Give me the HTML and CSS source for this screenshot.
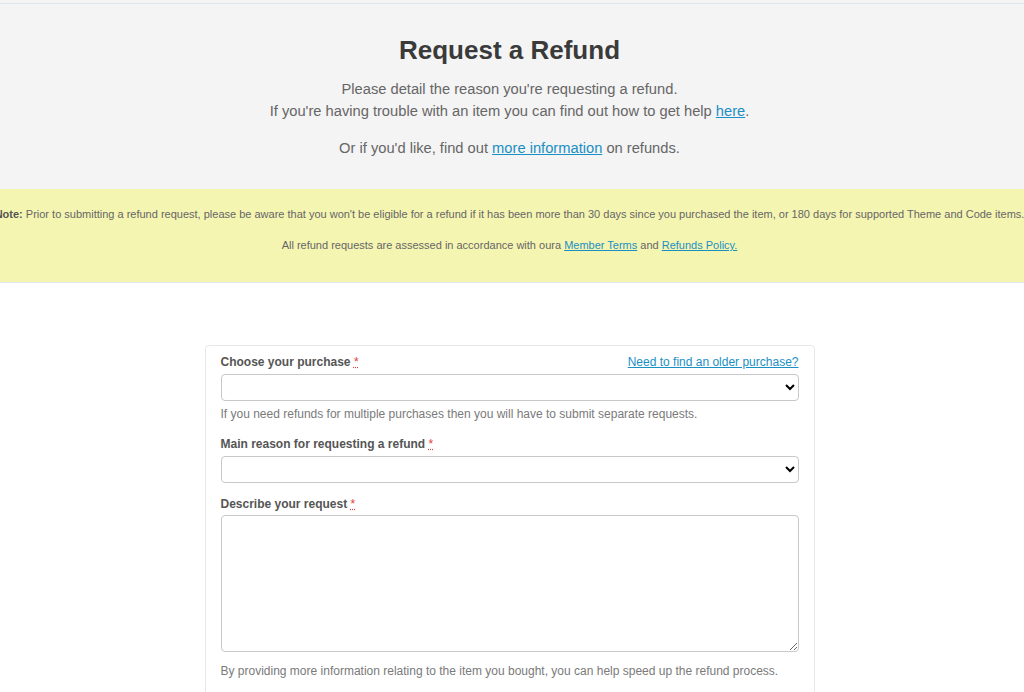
FILE: index.html
```html
<!DOCTYPE html>
<html lang="en">
<head>
  <meta charset="UTF-8">
  <title>Request a Refund</title>
  <link rel="stylesheet" href="styles.css">
</head>
<body>
  <div class="topbar"></div>
  <div class="hero">
    <h1 class="hero-title">Request a Refund</h1>
    <p class="hero-text">Please detail the reason you're requesting a refund.<br>If you're having trouble with an item you can find out how to get help <a href="#">here</a>.</p>
    <p class="hero-text">Or if you'd like, find out <a href="#">more information</a> on refunds.</p>
  </div>
  <div class="notice">
    <p class="notice-line"><span><strong>Note:</strong> Prior to submitting a refund request, please be aware that you won't be eligible for a refund if it has been more than 30 days since you purchased the item, or 180 days for supported Theme and Code items.</span></p>
    <p class="notice-line"><span>All refund requests are assessed in accordance with oura <a href="#">Member Terms</a> and <a href="#">Refunds Policy.</a></span></p>
  </div>
  <div class="main">
    <form class="card">
      <div class="field">
        <div class="label-row">
          <label class="label" for="purchase">Choose your purchase <abbr title="required">*</abbr></label>
          <a class="small-link" href="#">Need to find an older purchase?</a>
        </div>
        <select id="purchase" class="input"></select>
        <p class="hint">If you need refunds for multiple purchases then you will have to submit separate requests.</p>
      </div>
      <div class="field field-reason">
        <div class="label-row">
          <label class="label" for="reason">Main reason for requesting a refund <abbr title="required">*</abbr></label>
        </div>
        <select id="reason" class="input"></select>
      </div>
      <div class="field field-describe">
        <div class="label-row">
          <label class="label" for="describe">Describe your request <abbr title="required">*</abbr></label>
        </div>
        <textarea id="describe" class="input textarea"></textarea>
        <p class="hint hint-describe">By providing more information relating to the item you bought, you can help speed up the refund process.</p>
      </div>
    </form>
  </div>
</body>
</html>
```

FILE: styles.css
```css
* {
  box-sizing: border-box;
}
html, body {
  margin: 0;
  padding: 0;
  background: #fff;
  font-family: "Liberation Sans", Arial, sans-serif;
  overflow: hidden;
}
a {
  color: #1a8fc4;
  text-decoration: underline;
}
.topbar {
  height: 4px;
  background: #f4f4f4;
  border-bottom: 1px solid #dfe5ec;
}
/* header */
.hero {
  background: #f4f4f4;
  text-align: center;
  padding: 32px 5px 30px 0;
}
.hero-title {
  margin: 0 0 14px;
  font-size: 26px;
  line-height: 28px;
  font-weight: bold;
  color: #3a3a3a;
}
.hero-text {
  margin: 0 0 15px;
  font-size: 14.7px;
  line-height: 22px;
  color: #666;
}
.hero-text:last-child {
  margin-bottom: 0;
}
/* yellow note */
.notice {
  background: #f5f5b2;
  border-bottom: 1px solid #e3e8ec;
  padding: 16px 5px 28px 0;
  overflow: hidden;
}
.notice-line {
  display: flex;
  justify-content: center;
  white-space: nowrap;
  margin: 0 0 13px;
  font-size: 11px;
  line-height: 18px;
  color: #666;
}
.notice-line:last-child {
  margin-bottom: 0;
}
.notice-line strong {
  color: #555;
}
/* form */
.main {
  padding: 62px 5px 0 0;
}
.card {
  width: 610px;
  margin: 0 auto;
  background: #fff;
  border: 1px solid #e6e8ea;
  border-radius: 4px;
  padding: 9px 15px 40px;
}
.label-row {
  display: flex;
  justify-content: space-between;
  align-items: baseline;
  margin-bottom: 4px;
}
.label {
  font-size: 12px;
  line-height: 15px;
  font-weight: bold;
  color: #555;
}
abbr {
  color: #e0403a;
  text-decoration: underline dotted;
  font-weight: normal;
}
.small-link {
  font-size: 12px;
  line-height: 15px;
}
.input {
  display: block;
  width: 100%;
  height: 27px;
  margin: 0;
  border: 1px solid #c8c8c8;
  border-radius: 4px;
  background: #fff;
  font-family: inherit;
  font-size: 13px;
}
.textarea {
  height: 137px;
  resize: vertical;
}
.hint {
  margin: 5px 0 0;
  font-size: 12px;
  line-height: 16px;
  color: #7a7a7a;
}
.field-reason {
  margin-top: 15px;
}
.field-describe {
  margin-top: 14px;
}
.field-describe .label-row {
  margin-bottom: 3px;
}
.hint-describe {
  margin-top: 11px;
}
```
